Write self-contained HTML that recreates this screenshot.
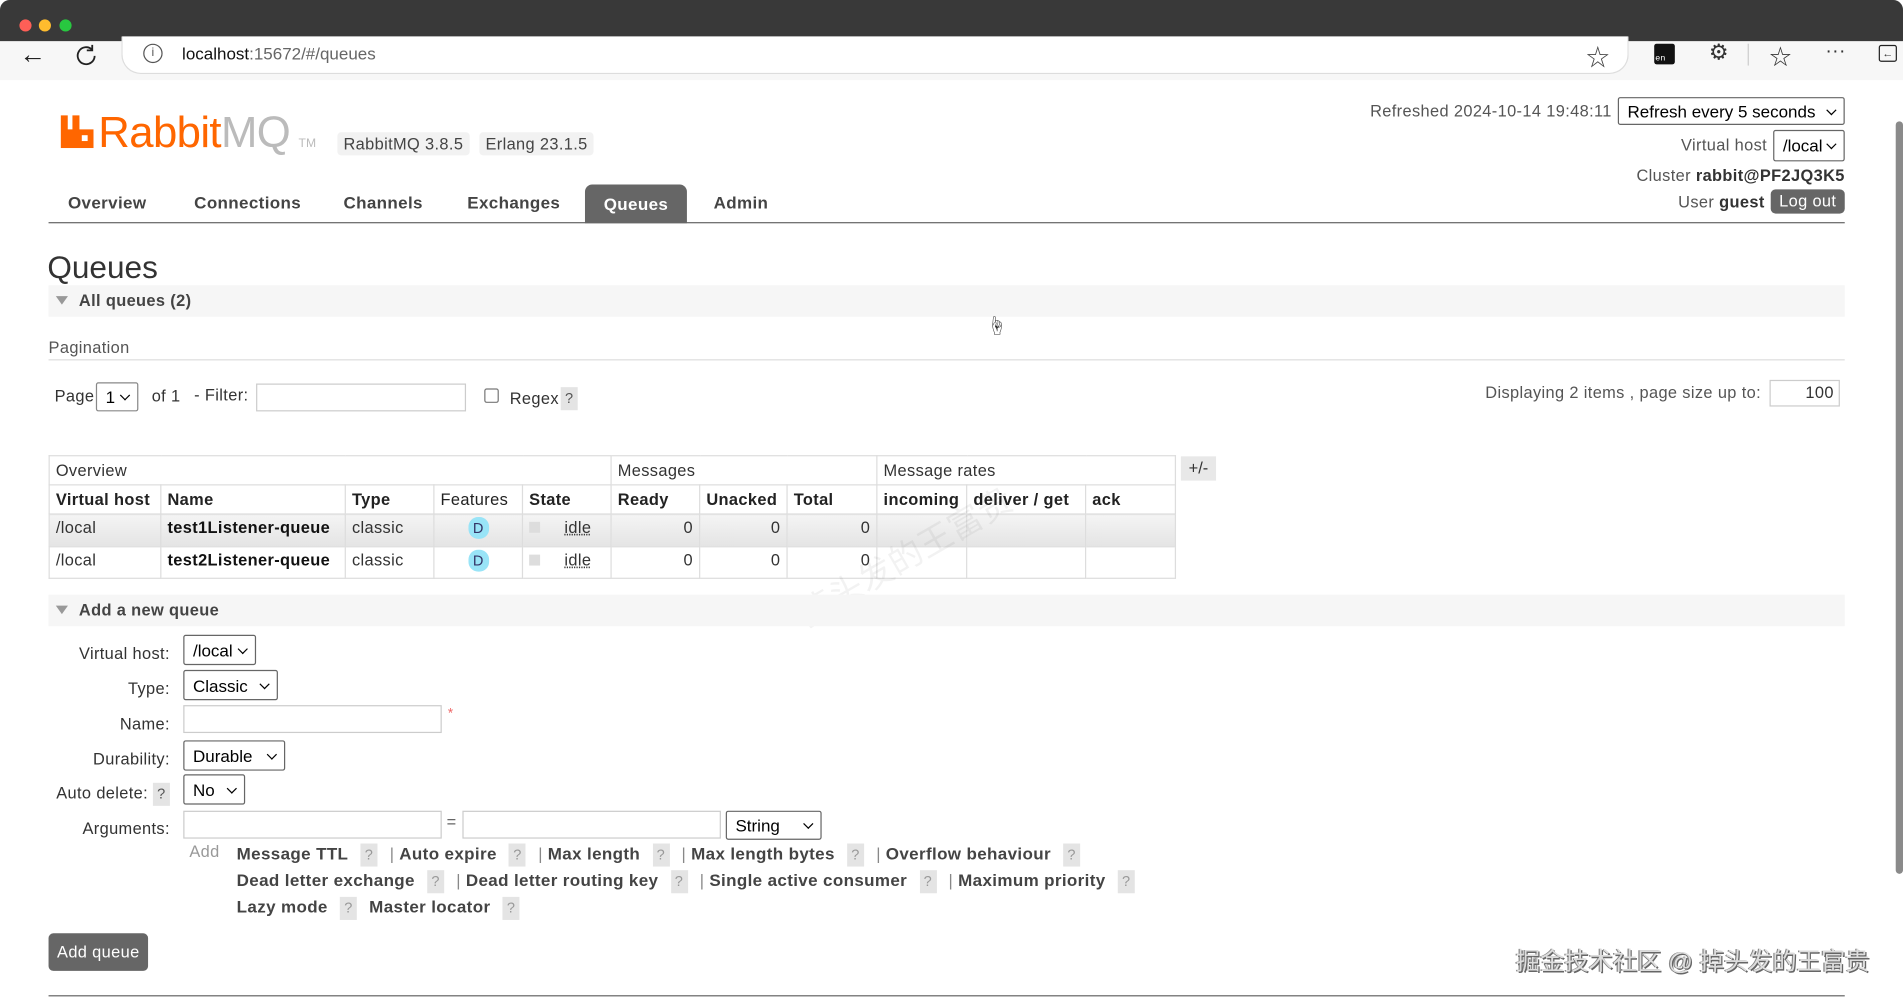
<!DOCTYPE html>
<html><head><meta charset="utf-8"><style>
html,body{margin:0;padding:0;width:1903px;height:998px;overflow:hidden;background:#fff}
#w{position:absolute;left:0;top:0;width:1568px;height:822px;transform:scale(1.21365);transform-origin:0 0;font-family:"Liberation Sans","Noto Sans CJK SC",sans-serif;font-size:13.5px;letter-spacing:0.3px;color:#333}
.a{position:absolute;white-space:nowrap}
.b{font-weight:bold}
.sel{position:absolute;border:1px solid #666;background:#fff;border-radius:2px;box-sizing:border-box;font-size:14px;letter-spacing:0;color:#000;padding-left:7px;line-height:normal;display:flex;align-items:center}
.sel:after{content:"";position:absolute;right:7px;top:50%;width:5px;height:5px;border-right:1.6px solid #000;border-bottom:1.6px solid #000;transform:translateY(-70%) rotate(45deg)}
.inp{position:absolute;border:1px solid #ccc;background:#fff;box-sizing:border-box}
.q{position:absolute;background:#e4e4e4;color:#999;font-size:12px;width:14px;height:19px;text-align:center;line-height:19px}
.qi{position:relative;display:inline-block;margin:0 6px}
table{border-collapse:collapse;position:absolute;left:40px;top:375px;table-layout:fixed}
td,th{border:1px solid #ddd;padding:0 5px;height:24px;text-align:left;font-size:13.5px;white-space:nowrap;box-sizing:border-box;overflow:visible}
th{font-weight:bold;color:#222}
.r td{height:26.5px;vertical-align:top;padding-top:3px}
.g td{background:linear-gradient(#f4f4f4,#e4e4e4)}
.num{text-align:right}
.D{display:inline-block;background:#99e4f7;color:#336;border-radius:8px;width:17px;height:18px;text-align:center;line-height:18px;font-size:12px;margin-top:2px;letter-spacing:0}
.sq{display:inline-block;width:9px;height:9px;background:#ddd;margin-right:20px}
.lnk{font-weight:bold;color:#444;font-size:14px}
.sp{color:#888}
</style></head><body><div id="w">
<div class="a" style="left:0;top:0;width:1568px;height:34px;background:#393939;border-radius:8px 8px 0 0"></div>
<div class="a" style="left:16px;top:16px;width:10px;height:10px;border-radius:5px;background:#fe5f57"></div>
<div class="a" style="left:32px;top:16px;width:10px;height:10px;border-radius:5px;background:#febc2e"></div>
<div class="a" style="left:49px;top:16px;width:10px;height:10px;border-radius:5px;background:#28c840"></div>
<div class="a" style="left:0;top:34px;width:1568px;height:32px;background:#f7f7f7"></div>
<div class="a" style="left:100px;top:30px;width:1240px;height:30px;background:#fff;border:1px solid #ddd;border-top:none;border-radius:0 0 16px 16px"></div>
<div class="a" style="left:16px;top:32px;font-size:22px;color:#222">←</div>
<svg class="a" style="left:61px;top:35px" width="20" height="20" viewBox="0 0 20 20"><path d="M15 6A7 7 0 1 0 17 11" fill="none" stroke="#222" stroke-width="1.5"/><path d="M15 2v4.5h-4.5" fill="none" stroke="#222" stroke-width="1.5"/></svg>
<div class="a" style="left:118px;top:36px;width:14px;height:14px;border:1.3px solid #555;border-radius:50%;font-size:10px;text-align:center;line-height:14px;color:#555;letter-spacing:0">i</div>
<div class="a" style="left:150px;top:36px;font-size:14px;color:#111;letter-spacing:0">localhost<span style="color:#666">:15672/#/queues</span></div>
<div class="a" style="left:1307px;top:33px;font-size:19px;color:#444">☆</div>
<div class="a" style="left:1363px;top:36px;width:17px;height:17px;background:#111;border-radius:2px;color:#fff;font-size:7px;line-height:26px;text-align:left;padding-left:1px;box-sizing:border-box">en</div>
<div class="a" style="left:1408px;top:33px;font-size:18px;color:#333">⚙</div>
<div class="a" style="left:1440px;top:36px;width:1px;height:18px;background:#ccc"></div>
<div class="a" style="left:1458px;top:33px;font-size:18px;color:#333">☆</div>
<div class="a" style="left:1504px;top:34px;font-size:16px;color:#333">···</div>
<div class="a" style="left:1548px;top:37px;width:13px;height:12px;border:1.5px solid #222;border-radius:2px;font-size:9px;line-height:12px;text-align:center;letter-spacing:0">←</div>
<div class="a" style="left:1558px;top:86px;width:10px;height:736px;background:#fff"></div>
<div class="a" style="left:1562px;top:100px;width:6px;height:620px;background:#8a8a8a;border-radius:3px"></div>
<svg class="a" style="left:50px;top:95px" width="29" height="27" viewBox="0 0 30 28"><path d="M0 0h6v12h4V0h6v12h12v16H0z" fill="#f60"/><rect x="18" y="17" width="5" height="5" fill="#fff"/></svg>
<div class="a" style="left:81px;top:88px;font-size:36px;color:#f60;letter-spacing:-0.5px">Rabbit<span style="color:#bbb">MQ</span></div>
<div class="a" style="left:246px;top:113px;font-size:10px;color:#bbb;letter-spacing:0">TM</div>
<div class="a" style="left:278px;top:109px;padding:2px 5px;background:#f2f2f2;border-radius:3px;font-size:13.5px;color:#444">RabbitMQ 3.8.5</div>
<div class="a" style="left:395px;top:109px;padding:2px 5px;background:#f2f2f2;border-radius:3px;font-size:13.5px;color:#444">Erlang 23.1.5</div>
<div class="a b" style="left:56px;top:159px;font-size:14px;color:#444">Overview</div>
<div class="a b" style="left:160px;top:159px;font-size:14px;color:#444">Connections</div>
<div class="a b" style="left:283px;top:159px;font-size:14px;color:#444">Channels</div>
<div class="a b" style="left:385px;top:159px;font-size:14px;color:#444">Exchanges</div>
<div class="a b" style="left:482px;top:152px;width:84px;height:32px;background:#666;border-radius:6px 6px 0 0;color:#fff;font-size:14px;text-align:center;line-height:32px">Queues</div>
<div class="a b" style="left:588px;top:159px;font-size:14px;color:#444">Admin</div>
<div class="a" style="left:40px;top:183px;width:1480px;height:1px;background:#666"></div>
<div class="a" style="right:240px;top:84px;color:#555">Refreshed 2024-10-14 19:48:11</div>
<div class="sel" style="left:1333px;top:80px;width:187px;height:23px">Refresh every 5 seconds</div>
<div class="a" style="right:112px;top:112px;color:#555">Virtual host</div>
<div class="sel" style="left:1461px;top:107px;width:59px;height:26px">/local</div>
<div class="a" style="right:48px;top:137px;color:#555">Cluster <b style="color:#333">rabbit@PF2JQ3K5</b></div>
<div class="a" style="right:114px;top:159px;color:#555">User <b style="color:#333">guest</b></div>
<div class="a" style="left:1459px;top:156px;width:61px;height:20px;background:#666;border-radius:4px;color:#fff;text-align:center;line-height:20px">Log out</div>
<div class="a" style="left:39px;top:205px;font-size:26px;color:#333;letter-spacing:0">Queues</div>
<div class="a" style="left:40px;top:235px;width:1480px;height:26px;background:#f6f6f6"></div>
<div class="a" style="left:46px;top:244px;width:0;height:0;border-left:5px solid transparent;border-right:5px solid transparent;border-top:7px solid #999"></div>
<div class="a b" style="left:65px;top:240px;color:#444">All queues (2)</div>
<div class="a" style="left:813px;top:255px;font-size:16px">☝</div>
<div class="a" style="left:40px;top:279px;color:#555">Pagination</div>
<div class="a" style="left:40px;top:296px;width:1480px;height:1px;background:#ddd"></div>
<div class="a" style="left:45px;top:319px">Page</div>
<div class="sel" style="left:79px;top:315px;width:35px;height:24px;border-color:#888">1</div>
<div class="a" style="left:125px;top:319px">of 1</div>
<div class="a" style="left:160px;top:318px">- Filter:</div>
<div class="inp" style="left:211px;top:316px;width:173px;height:23px"></div>
<div class="a" style="left:399px;top:320px;width:10px;height:10px;border:1px solid #777;border-radius:2px"></div>
<div class="a" style="left:420px;top:321px">Regex</div>
<div class="q" style="left:462px;top:319px;color:#555">?</div>
<div class="a" style="right:117px;top:316px;color:#555">Displaying 2 items , page size up to:</div>
<div class="inp" style="left:1458px;top:313px;width:58px;height:22px;text-align:right;padding-right:4px;line-height:20px">100</div>
<table>
<colgroup><col style="width:92px"><col style="width:152px"><col style="width:73px"><col style="width:73px"><col style="width:73px"><col style="width:73px"><col style="width:72px"><col style="width:74px"><col style="width:74px"><col style="width:98px"><col style="width:74px"></colgroup>
<tr><td colspan="5">Overview</td><td colspan="3">Messages</td><td colspan="3">Message rates</td></tr>
<tr><th>Virtual host</th><th>Name</th><th>Type</th><th style="font-weight:normal">Features</th><th>State</th><th>Ready</th><th>Unacked</th><th>Total</th><th>incoming</th><th>deliver / get</th><th>ack</th></tr>
<tr class="r g"><td>/local</td><td class="b" style="color:#111">test1Listener-queue</td><td>classic</td><td style="text-align:center;padding-top:0"><span class="D">D</span></td><td><span class="sq"></span><u style="text-decoration-style:dotted">idle</u></td><td class="num">0</td><td class="num">0</td><td class="num">0</td><td></td><td></td><td></td></tr>
<tr class="r"><td>/local</td><td class="b" style="color:#111">test2Listener-queue</td><td>classic</td><td style="text-align:center;padding-top:0"><span class="D">D</span></td><td><span class="sq"></span><u style="text-decoration-style:dotted">idle</u></td><td class="num">0</td><td class="num">0</td><td class="num">0</td><td></td><td></td><td></td></tr>
</table>
<div class="a" style="left:973px;top:376px;width:29px;height:20px;background:#e8e8e8;text-align:center;line-height:20px;letter-spacing:0">+/-</div>
<div class="a" style="left:650px;top:490px;font-size:28px;color:rgba(0,0,0,0.05);transform:rotate(-30deg);transform-origin:0 0">掉头发的王富贵</div>
<div class="a" style="left:40px;top:490px;width:1480px;height:26px;background:#f6f6f6"></div>
<div class="a" style="left:46px;top:499px;width:0;height:0;border-left:5px solid transparent;border-right:5px solid transparent;border-top:7px solid #999"></div>
<div class="a b" style="left:65px;top:495px;color:#444">Add a new queue</div>
<div class="a" style="right:1428px;top:531px">Virtual host:</div>
<div class="sel" style="left:151px;top:523px;width:60px;height:25px">/local</div>
<div class="a" style="right:1428px;top:560px">Type:</div>
<div class="sel" style="left:151px;top:552px;width:78px;height:25px">Classic</div>
<div class="a" style="right:1428px;top:589px">Name:</div>
<div class="inp" style="left:151px;top:581px;width:213px;height:23px"></div>
<div class="a" style="left:369px;top:582px;color:#e66;font-size:11px">*</div>
<div class="a" style="right:1428px;top:618px">Durability:</div>
<div class="sel" style="left:151px;top:610px;width:84px;height:25px">Durable</div>
<div class="a" style="right:1446px;top:646px">Auto delete:</div>
<div class="q" style="left:126px;top:645px;color:#555">?</div>
<div class="sel" style="left:151px;top:638px;width:51px;height:25px">No</div>
<div class="a" style="right:1428px;top:675px">Arguments:</div>
<div class="inp" style="left:151px;top:668px;width:213px;height:23px"></div>
<div class="a" style="left:368px;top:670px;color:#666">=</div>
<div class="inp" style="left:381px;top:668px;width:213px;height:23px"></div>
<div class="sel" style="left:598px;top:668px;width:79px;height:24px">String</div>
<div class="a" style="left:156px;top:694px;color:#999">Add</div>
<div class="a" style="left:195px;top:695px"><span class="lnk">Message TTL</span> <span class="q qi">?</span> <span class="sp">|</span> <span class="lnk">Auto expire</span> <span class="q qi">?</span> <span class="sp">|</span> <span class="lnk">Max length</span> <span class="q qi">?</span> <span class="sp">|</span> <span class="lnk">Max length bytes</span> <span class="q qi">?</span> <span class="sp">|</span> <span class="lnk">Overflow behaviour</span> <span class="q qi">?</span></div>
<div class="a" style="left:195px;top:717px"><span class="lnk">Dead letter exchange</span> <span class="q qi">?</span> <span class="sp">|</span> <span class="lnk">Dead letter routing key</span> <span class="q qi">?</span> <span class="sp">|</span> <span class="lnk">Single active consumer</span> <span class="q qi">?</span> <span class="sp">|</span> <span class="lnk">Maximum priority</span> <span class="q qi">?</span></div>
<div class="a" style="left:195px;top:739px"><span class="lnk">Lazy mode</span> <span class="q qi">?</span> <span class="lnk">Master locator</span> <span class="q qi">?</span></div>
<div class="a" style="left:40px;top:769px;width:82px;height:31px;background:#666;border-radius:4px;color:#fff;text-align:center;line-height:31px">Add queue</div>
<div class="a" style="left:40px;top:820px;width:1480px;height:1px;background:#666"></div>
<div class="a" style="left:1249px;top:776px;font-size:20px;color:#ddd;letter-spacing:0;text-shadow:1px 1px 0 #666,-1px 0 0 #888">掘金技术社区 @ 掉头发的王富贵</div>
</div></body></html>
